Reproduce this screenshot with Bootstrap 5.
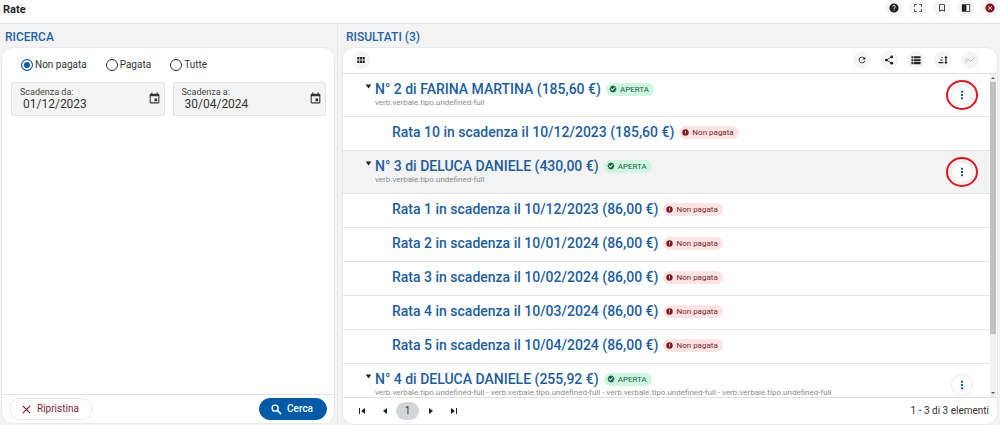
<!DOCTYPE html>
<html lang="it">
<head>
<meta charset="utf-8">
<meta name="viewport" content="width=device-width, initial-scale=1">
<title>Rate</title>
<link href="https://cdn.jsdelivr.net/npm/bootstrap@5.3.0/dist/css/bootstrap.min.css" rel="stylesheet">
<style>
body { font-family: Roboto, "Liberation Sans", sans-serif; font-size: 10px; line-height: 16px; color: #333; background: #f3f3f3; }
svg { fill: currentColor; display: block; flex: none; }
.topbar { height: 24px; background: #fff; border-bottom: 1px solid #e2e2e2; padding: 0 1px 0 3px; }
.topbar h1 { font-size: 11px; line-height: 20px; font-weight: 700; color: #222; }
.topbar .tools { gap: 6px; margin-top: -1px; }
.tool { width: 18px; height: 18px; border: 0; border-radius: 50%; background: #f5f5f5; color: #222; display: grid; place-items: center; padding: 0; }
.tool.muted-tool { color: #aaa; }
.tool.close-tool { color: #8c1218; }
.tool svg { width: 10px; height: 10px; }
.columns { min-height: 0; }
.search-col { flex: 0 0 338px; padding: 5px 2px 1px 1px; border-right: 1px solid #e8e8e8; }
.result-col { padding: 5px 2px 0 4px; min-width: 0; }
.pane-title { font-size: 12px; line-height: 16px; font-weight: 500; color: #1b64ad; margin: 0 0 2px 4px; }
.pane { background: #fff; border: 1px solid #e9e9e9; border-radius: 12px; overflow: hidden; min-height: 0; }
.choices { padding: 9px 19px; gap: 19px; }
.choices label { color: #333; }
.choices input { appearance: none; width: 12px; height: 12px; margin: 0 2px 0 0; border: 1px solid #333; border-radius: 50%; box-shadow: inset 0 0 0 1px #fff; }
.choices input:checked { border: 1px solid #0b5cad; background: #0b5cad; box-shadow: inset 0 0 0 2px #fff; }
.dates { padding: 0 8px 0 9px; gap: 8px; }
.date-field { height: 34px; background: #f4f4f4; border: 1px solid #e3e3e3; border-radius: 2px; padding: 1px 3px 3px 8px; }
.date-field label { font-size: 9px; line-height: 11px; color: #444; }
.date-field input { border: 0; background: none; outline: 0; font-size: 12px; line-height: 12px; height: 12px; color: #333; padding: 0 0 0 3px; width: 100%; min-width: 0; }
.date-field button { border: 0; background: none; padding: 0; color: #333; }
.actions { height: 29px; border-top: 1px solid #e5e5e5; padding: 0 7px; }
.pill { height: 22px; border-radius: 11px; border: 1px solid #e8e8e8; background: #fff; font-size: 10px; line-height: 16px; padding: 0 13px 0 11px; color: #84222b; display: flex; align-items: center; gap: 5px; }
.pill.search { background: #005aa9; border-color: #005aa9; color: #fff; font-weight: 500; }
.toolbar { height: 26px; border-bottom: 1px solid #ddd; padding: 0 18px 2px 9px; }
.toolbar .tools { gap: 9px; }
.results, .listing { min-height: 0; }
.listing { overflow: hidden; }
.entry { border-bottom: 1px solid #e5e5e5; color: #1b5e9f; }
.entry h2 { font-size: 14px; line-height: 18px; font-weight: 500; margin: 0; }
.entry.person { height: 43px; padding: 6px 17px 0 22px; }
.entry.person.active { background: #f3f3f3; }
.entry.rate { height: 34px; padding: 0 12px 3px 49px; }
.twist { border: 0; background: none; padding: 1px 0 0; width: 10px; height: 11px; color: #222; }
.note { font-size: 8px; line-height: 9px; color: #8c8c8c; white-space: nowrap; }
.tag { height: 13px; border-radius: 7px; font-size: 8px; line-height: 13px; font-weight: 400; padding: 0 5px 0 3px; display: inline-flex; align-items: center; gap: 3px; margin-left: 5px; white-space: nowrap; }
.tag.open { background: #cdf7e0; color: #1c6245; }
.tag.unpaid { background: #fde3e3; color: #7c1c24; }
.more { position: relative; width: 22px; height: 22px; border-radius: 50%; border: 1px solid #e8e8e8; background: #fff; color: #165a83; padding: 0; display: grid; place-items: center; margin-top: 4px; flex: none; }
.more.ringed::after { content: ""; position: absolute; inset: -5px -6px; border: 2px solid #e3141e; border-radius: 50%; }
.scroller { flex: 0 0 6px; margin-right: 1px; background: #f1f1f1; color: #555; }
.scroller .thumb { height: 78%; background: #c1c1c1; align-self: stretch; }
.pager { height: 27px; border-top: 1px solid #e0e0e0; padding: 0 8px 1px 7px; }
.pager button { border: 0; background: none; padding: 0; width: 23px; height: 18px; display: grid; place-items: center; color: #222; }
.pager button.current { background: #d3d6d8; border-radius: 9px; font-size: 10px; color: #333; }
.pager .total { color: #333; }
</style>
</head>
<body class="vh-100 d-flex flex-column overflow-hidden">
<svg class="d-none" xmlns="http://www.w3.org/2000/svg">
  <symbol id="ok" viewBox="0 0 24 24"><path fill-rule="evenodd" d="M12 1l3 2 4 1 1 4 3 4-3 4-1 4-4 1-3 2-3-2-4-1-1-4-3-4 3-4 1-4 4-1zM10 17l8-8-2-2-6 6-3-3-2 2z"/></symbol>
  <symbol id="bad" viewBox="0 0 24 24"><path fill-rule="evenodd" d="M12 1a11 11 0 1 0 0 22 11 11 0 0 0 0-22zm-1.500 5h3v7h-3zm0 9h3v3h-3z"/></symbol>
  <symbol id="down" viewBox="0 0 10 10"><path d="M1 2h8L5 8z"/></symbol>
  <symbol id="dots" viewBox="0 0 12 12"><path d="M4.800 .8h2.400v2.400H4.800zM4.800 4.800h2.400v2.400H4.800zM4.800 8.800h2.400v2.400H4.800z"/></symbol>
  <symbol id="cal" viewBox="0 0 24 24"><path d="M19 3h-1V1h-2v2H8V1H6v2H5a2 2 0 0 0-2 2v14a2 2 0 0 0 2 2h14a2 2 0 0 0 2-2V5a2 2 0 0 0-2-2zm0 16H5V8h14zm-7-7h5v5h-5z"/></symbol>
</svg>

<header class="topbar d-flex justify-content-between flex-shrink-0">
  <h1 class="m-0">Rate</h1>
  <div class="tools d-flex">
    <button class="tool" type="button" aria-label="Aiuto"><svg viewBox="0 0 24 24"><path fill-rule="evenodd" d="M12 1a11 11 0 1 0 0 22 11 11 0 0 0 0-22zm1 17h-2v-2h2zm2.070-7.750l-.9.920C13.450 12.900 13 13.500 13 15h-2v-.5c0-1.100.45-2.100 1.170-2.830l1.240-1.260A2 2 0 1 0 10 9H8a4 4 0 1 1 8 0c0 .88-.36 1.680-.93 2.250z"/></svg></button>
    <button class="tool" type="button" aria-label="Schermo intero"><svg viewBox="0 0 24 24"><path d="M3 3h6v2H5v4H3zM15 3h6v6h-2V5h-4zM3 15h2v4h4v2H3zM19 15h2v6h-6v-2h4z"/></svg></button>
    <button class="tool" type="button" aria-label="Segnalibro"><svg viewBox="0 0 24 24"><path d="M17 3H7a2 2 0 0 0-2 2v16l7-3 7 3V5a2 2 0 0 0-2-2zm0 15l-5-2.200L7 18V5h10z"/></svg></button>
    <button class="tool" type="button" aria-label="Pannello"><svg viewBox="0 0 24 24"><path fill-rule="evenodd" d="M2 3h20v18H2zM13 5v14h7V5z"/></svg></button>
    <button class="tool close-tool" type="button" aria-label="Chiudi"><svg viewBox="0 0 24 24"><path fill-rule="evenodd" d="M12 1a11 11 0 1 0 0 22 11 11 0 0 0 0-22zm5 14.600L15.600 17 12 13.400 8.400 17 7 15.600l3.600-3.600L7 8.400 8.400 7l3.600 3.600L15.600 7 17 8.400 13.400 12z"/></svg></button>
  </div>
</header>

<main class="columns d-flex flex-grow-1">
  <section class="search-col d-flex flex-column">
    <h2 class="pane-title">RICERCA</h2>
    <form class="pane d-flex flex-column flex-grow-1">
      <div class="choices d-flex">
        <label class="d-flex align-items-center"><input type="radio" name="stato" checked>Non pagata</label>
        <label class="d-flex align-items-center"><input type="radio" name="stato">Pagata</label>
        <label class="d-flex align-items-center"><input type="radio" name="stato">Tutte</label>
      </div>
      <div class="dates d-flex">
        <div class="date-field d-flex align-items-center flex-fill">
          <div class="d-flex flex-column flex-grow-1"><label for="da">Scadenza da:</label><input id="da" type="text" value="01/12/2023"></div>
          <button type="button" aria-label="Calendario"><svg width="13" height="13"><use href="#cal"/></svg></button>
        </div>
        <div class="date-field d-flex align-items-center flex-fill">
          <div class="d-flex flex-column flex-grow-1"><label for="a">Scadenza a:</label><input id="a" type="text" value="30/04/2024"></div>
          <button type="button" aria-label="Calendario"><svg width="13" height="13"><use href="#cal"/></svg></button>
        </div>
      </div>
      <div class="actions d-flex justify-content-between align-items-center mt-auto">
        <button class="pill" type="reset"><svg width="11" height="11" viewBox="0 0 12 12"><path d="M2 2l8 8M10 2l-8 8" stroke="currentColor" stroke-width="1.300"/></svg>Ripristina</button>
        <button class="pill search" type="button"><svg width="11" height="11" viewBox="0 0 12 12"><circle cx="4.500" cy="4.500" r="3.300" fill="none" stroke="currentColor" stroke-width="1.500"/><path d="M7 7l4 4" stroke="currentColor" stroke-width="1.800"/></svg>Cerca</button>
      </div>
    </form>
  </section>

  <section class="result-col d-flex flex-column flex-grow-1">
    <h2 class="pane-title">RISULTATI (3)</h2>
    <div class="pane d-flex flex-column flex-grow-1">
      <div class="toolbar d-flex justify-content-between align-items-center flex-shrink-0">
        <button class="tool" type="button" aria-label="Griglia"><svg viewBox="0 0 24 24"><path d="M3 5h5v6H3zM9.500 5h5v6h-5zM16 5h5v6h-5zM3 13h5v6H3zM9.500 13h5v6h-5zM16 13h5v6h-5z"/></svg></button>
        <div class="tools d-flex">
          <button class="tool" type="button" aria-label="Aggiorna"><svg viewBox="0 0 24 24"><path d="M17.650 6.350A8 8 0 1 0 19.730 14h-2.080A6 6 0 1 1 12 6c1.660 0 3.140.69 4.220 1.780L13 11h7V4z"/></svg></button>
          <button class="tool" type="button" aria-label="Condividi"><svg viewBox="0 0 24 24"><circle cx="5.500" cy="12" r="3.300"/><circle cx="18.500" cy="4.500" r="3.300"/><circle cx="18.500" cy="19.500" r="3.300"/><path d="M18 4.500L6 12l12 7.500" fill="none" stroke="currentColor" stroke-width="2"/></svg></button>
          <button class="tool" type="button" aria-label="Elenco"><svg viewBox="0 0 24 24"><path d="M1 3h4v5H1zM6.500 3H23v5H6.500zM1 10h4v5H1zM6.500 10H23v5H6.500zM1 17h4v5H1zM6.500 17H23v5H6.500z"/></svg></button>
          <button class="tool" type="button" aria-label="Ordina"><svg viewBox="0 0 24 24"><path d="M8 5h3v2H8zM5 11h6v2H5zM1 17h12v3H1zM17.500 7H15l4-5 4 5h-2.500v10H23l-4 5-4-5h2.500z"/></svg></button>
          <button class="tool muted-tool" type="button" aria-label="Grafico"><svg viewBox="0 0 24 24"><path d="M1 18l7-8 6 6L23 5M1 12l4-4" fill="none" stroke="currentColor" stroke-width="2"/></svg></button>
        </div>
      </div>

      <div class="results d-flex flex-grow-1">
        <div class="listing flex-grow-1">
          <div class="entry person d-flex">
            <button class="twist" type="button" aria-label="Comprimi"><svg width="7" height="9"><use href="#down"/></svg></button>
            <div class="flex-grow-1">
              <div class="d-flex align-items-center"><h2>N° 2 di FARINA MARTINA (185,60 €)</h2><span class="tag open"><svg width="8" height="8"><use href="#ok"/></svg>APERTA</span></div>
              <div class="note">verb.verbale.tipo.undefined-full</div>
            </div>
            <button class="more ringed" type="button" aria-label="Azioni"><svg width="10" height="10"><use href="#dots"/></svg></button>
          </div>
          <div class="entry rate d-flex align-items-center"><h2>Rata 10 in scadenza il 10/12/2023 (185,60 €)</h2><span class="tag unpaid"><svg width="7" height="7"><use href="#bad"/></svg>Non pagata</span></div>
          <div class="entry person active d-flex">
            <button class="twist" type="button" aria-label="Comprimi"><svg width="7" height="9"><use href="#down"/></svg></button>
            <div class="flex-grow-1">
              <div class="d-flex align-items-center"><h2>N° 3 di DELUCA DANIELE (430,00 €)</h2><span class="tag open"><svg width="8" height="8"><use href="#ok"/></svg>APERTA</span></div>
              <div class="note">verb.verbale.tipo.undefined-full</div>
            </div>
            <button class="more ringed" type="button" aria-label="Azioni"><svg width="10" height="10"><use href="#dots"/></svg></button>
          </div>
          <div class="entry rate d-flex align-items-center"><h2>Rata 1 in scadenza il 10/12/2023 (86,00 €)</h2><span class="tag unpaid"><svg width="7" height="7"><use href="#bad"/></svg>Non pagata</span></div>
          <div class="entry rate d-flex align-items-center"><h2>Rata 2 in scadenza il 10/01/2024 (86,00 €)</h2><span class="tag unpaid"><svg width="7" height="7"><use href="#bad"/></svg>Non pagata</span></div>
          <div class="entry rate d-flex align-items-center"><h2>Rata 3 in scadenza il 10/02/2024 (86,00 €)</h2><span class="tag unpaid"><svg width="7" height="7"><use href="#bad"/></svg>Non pagata</span></div>
          <div class="entry rate d-flex align-items-center"><h2>Rata 4 in scadenza il 10/03/2024 (86,00 €)</h2><span class="tag unpaid"><svg width="7" height="7"><use href="#bad"/></svg>Non pagata</span></div>
          <div class="entry rate d-flex align-items-center"><h2>Rata 5 in scadenza il 10/04/2024 (86,00 €)</h2><span class="tag unpaid"><svg width="7" height="7"><use href="#bad"/></svg>Non pagata</span></div>
          <div class="entry person d-flex">
            <button class="twist" type="button" aria-label="Comprimi"><svg width="7" height="9"><use href="#down"/></svg></button>
            <div class="flex-grow-1">
              <div class="d-flex align-items-center"><h2>N° 4 di DELUCA DANIELE (255,92 €)</h2><span class="tag open"><svg width="8" height="8"><use href="#ok"/></svg>APERTA</span></div>
              <div class="note">verb.verbale.tipo.undefined-full - verb.verbale.tipo.undefined-full - verb.verbale.tipo.undefined-full - verb.verbale.tipo.undefined-full</div>
            </div>
            <button class="more" type="button" aria-label="Azioni"><svg width="10" height="10"><use href="#dots"/></svg></button>
          </div>
        </div>
        <div class="scroller d-flex flex-column align-items-center">
          <svg width="6" height="8" viewBox="0 0 6 8"><path d="M1 5h4L3 3z"/></svg>
          <div class="thumb"></div>
          <svg class="mt-auto" width="6" height="8" viewBox="0 0 6 8"><path d="M1 3h4L3 5z"/></svg>
        </div>
      </div>

      <nav class="pager d-flex align-items-center flex-shrink-0" aria-label="Pagine">
        <button type="button" aria-label="Prima"><svg width="8" height="8" viewBox="0 0 8 8"><path d="M1 1h1v6H1zM7 1v6L3 4z"/></svg></button>
        <button type="button" aria-label="Precedente"><svg width="8" height="8" viewBox="0 0 8 8"><path d="M6 1v6L2 4z"/></svg></button>
        <button class="current" type="button">1</button>
        <button type="button" aria-label="Successiva"><svg width="8" height="8" viewBox="0 0 8 8"><path d="M2 1v6l4-3z"/></svg></button>
        <button type="button" aria-label="Ultima"><svg width="8" height="8" viewBox="0 0 8 8"><path d="M6 1h1v6H6zM1 1v6l4-3z"/></svg></button>
        <span class="total ms-auto">1 - 3 di 3 elementi</span>
      </nav>
    </div>
  </section>
</main>
<script src="https://cdn.jsdelivr.net/npm/bootstrap@5.3.0/dist/js/bootstrap.bundle.min.js"></script>
</body>
</html>
